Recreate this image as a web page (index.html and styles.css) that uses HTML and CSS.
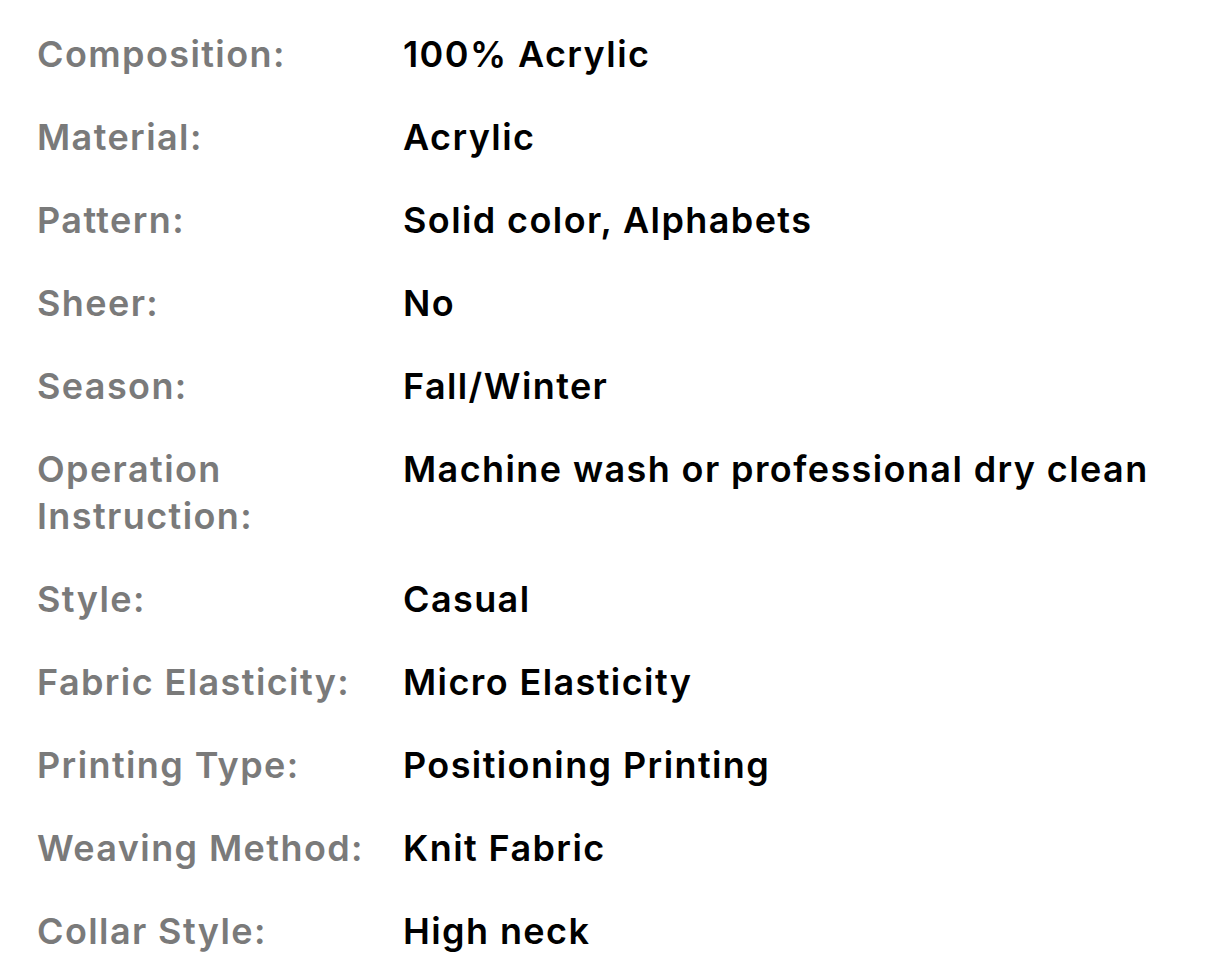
FILE: index.html
```html
<!DOCTYPE html>
<html lang="en">
<head>
<meta charset="utf-8">
<link rel="stylesheet" href="styles.css">
<title>Specifications</title>
</head>
<body>
<dl class="specs">
  <dt>Composition:</dt><dd>100% Acrylic</dd>
  <dt>Material:</dt><dd>Acrylic</dd>
  <dt>Pattern:</dt><dd>Solid color, Alphabets</dd>
  <dt>Sheer:</dt><dd>No</dd>
  <dt>Season:</dt><dd>Fall/Winter</dd>
  <dt class="wrap">Operation Instruction:</dt><dd>Machine wash or professional dry clean</dd>
  <dt>Style:</dt><dd>Casual</dd>
  <dt>Fabric Elasticity:</dt><dd>Micro Elasticity</dd>
  <dt>Printing Type:</dt><dd>Positioning Printing</dd>
  <dt>Weaving Method:</dt><dd>Knit Fabric</dd>
  <dt>Collar Style:</dt><dd>High neck</dd>
</dl>
</body>
</html>
```

FILE: styles.css
```css
html, body {
  margin: 0;
  padding: 0;
  background: #ffffff;
}
body {
  font-family: Inter, "Noto Sans", "Liberation Sans", sans-serif;
  font-size: 36px;
  line-height: 47px;
  font-weight: 600;
  letter-spacing: 1.4px;
}
.specs {
  margin: 0;
  padding: 31px 0 0 37px;
  display: grid;
  grid-template-columns: 366px 1fr;
  row-gap: 36px;
}
.specs dt {
  color: #7a7a7a;
  white-space: nowrap;
}
.specs dt.wrap {
  white-space: normal;
  width: 260px;
}
.specs dd {
  margin: 0;
  color: #000000;
}
```
